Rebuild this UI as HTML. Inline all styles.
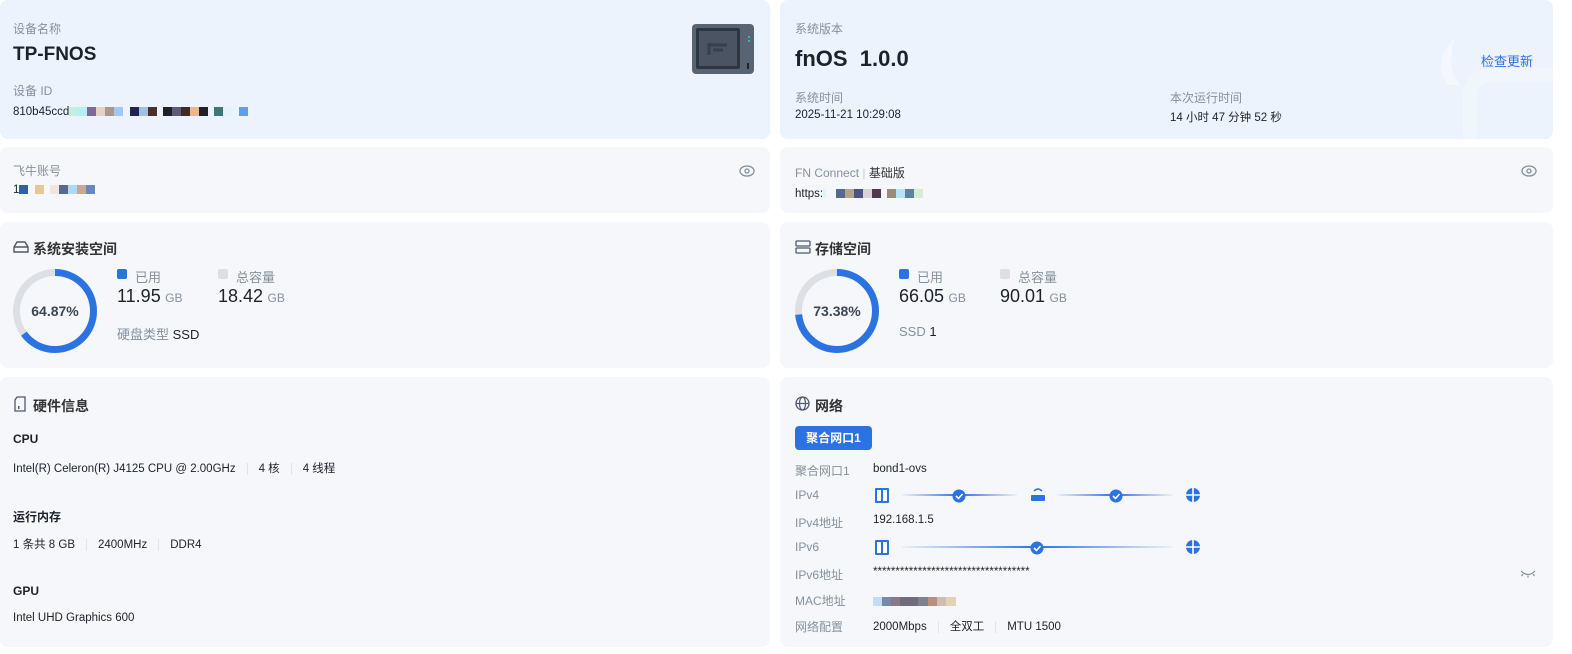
<!DOCTYPE html>
<html><head><meta charset="utf-8"><style>
*{margin:0;padding:0;box-sizing:border-box}
body{width:1572px;height:654px;background:#fff;font-family:"Liberation Sans","Noto Sans CJK SC",sans-serif;color:#1d2129;position:relative;overflow:hidden}
.c{position:absolute;border-radius:8px;background:#f5f7fb}
.b{background:#ecf3fc}
.a{position:absolute;white-space:nowrap}
.g{color:#86909c;font-size:12px}
.t{font-size:11.5px;color:#1d2129}
.h{font-size:14px;font-weight:bold;color:#333}
.px{display:inline-block;width:9px;height:9px;vertical-align:middle}
.sep{display:inline-block;width:1px;height:12px;background:#e0e3e8;margin:0 11px;vertical-align:middle}
.big{font-size:18px;color:#1d2129}
.u{font-size:12px;color:#86909c}
</style></head><body>
<div class="c b" style="left:0;top:0;width:770px;height:139px"></div>
<div class="c b" style="left:780px;top:0;width:773px;height:139px;overflow:hidden">
<svg style="position:absolute;left:640px;top:30px" width="140" height="120"><path d="M35 8 C20 20 15 45 30 55 L40 55 C28 40 30 25 35 8Z" fill="#f4f8fd"/><rect x="50" y="45" width="100" height="100" rx="20" fill="none" stroke="#f1f6fd" stroke-width="14"/></svg>
</div>
<div class="c" style="left:0;top:147px;width:770px;height:66px"></div>
<div class="c" style="left:780px;top:147px;width:773px;height:66px"></div>
<div class="c" style="left:0;top:222px;width:770px;height:146px"></div>
<div class="c" style="left:780px;top:222px;width:773px;height:146px"></div>
<div class="c" style="left:0;top:377px;width:770px;height:270px"></div>
<div class="c" style="left:780px;top:377px;width:773px;height:270px"></div>

<div class="a g" style="left:13px;top:20px">设备名称</div>
<div class="a" style="left:13px;top:44px;font-size:19px;font-weight:bold">TP-FNOS</div>
<div class="a g" style="left:13px;top:82px">设备 ID</div>
<div class="a t" style="left:13px;top:106px">810b45ccd<span class="px" style="background:#c7ece4"></span><span class="px" style="background:#b4eef6"></span><span class="px" style="background:#7b6a9a"></span><span class="px" style="background:#e6d2c4"></span><span class="px" style="background:#a8998c"></span><span class="px" style="background:#a0c8f6"></span>&nbsp;&nbsp;<span class="px" style="background:#1f2550"></span><span class="px" style="background:#a0c0e8"></span><span class="px" style="background:#4a3028"></span>&nbsp;&nbsp;<span class="px" style="background:#20222a"></span><span class="px" style="background:#5e5c78"></span><span class="px" style="background:#3e2a26"></span><span class="px" style="background:#ecb888"></span><span class="px" style="background:#1e2228"></span>&nbsp;&nbsp;<span class="px" style="background:#3a7878"></span><span class="px" style="background:#e4f2fa"></span>&nbsp;&nbsp;<span class="px" style="background:#5aa0ee"></span></div>
<svg class="a" style="left:691px;top:23px" width="66" height="55"><rect x="1" y="1" width="62" height="50" rx="4" fill="#566474"/><rect x="5" y="5" width="44" height="41" rx="2" fill="#2e3642"/><rect x="8" y="8" width="38" height="35" fill="#4a5462"/><path d="M18 20 L18 32 M18 22 L36 22 M22 27 L32 27" stroke="#37404c" stroke-width="3" fill="none"/><rect x="56" y="40" width="2" height="6" fill="#222"/><circle cx="58" cy="14" r="1" fill="#3cc"/><circle cx="58" cy="18" r="1" fill="#3cc"/></svg>

<div class="a g" style="left:795px;top:20px">系统版本</div>
<div class="a" style="left:795px;top:46px;font-size:22px;font-weight:bold">fnOS&nbsp;&nbsp;1.0.0</div>
<div class="a" style="left:1481px;top:51px;font-size:13px;color:#2a73e0">检查更新</div>
<div class="a g" style="left:795px;top:89px">系统时间</div>
<div class="a t" style="left:795px;top:109px">2025-11-21 10:29:08</div>
<div class="a g" style="left:1170px;top:89px">本次运行时间</div>
<div class="a t" style="left:1170px;top:109px">14 小时 47 分钟 52 秒</div>

<div class="a g" style="left:13px;top:162px">飞牛账号</div>
<div class="a t" style="left:13px;top:184px">1<span class="px" style="background:#3060a8"></span>&nbsp;&nbsp;<span class="px" style="background:#e6c898"></span>&nbsp;&nbsp;<span class="px" style="background:#f0e6dc"></span><span class="px" style="background:#5a6890"></span><span class="px" style="background:#b0d8f4"></span><span class="px" style="background:#c8aa88"></span><span class="px" style="background:#6888c0"></span></div>
<svg class="a" style="left:739px;top:164px" width="16" height="14"><ellipse cx="8" cy="7" rx="7" ry="5" fill="none" stroke="#86909c" stroke-width="1.3"/><circle cx="8" cy="7" r="2" fill="none" stroke="#86909c" stroke-width="1.3"/></svg>

<div class="a g" style="left:795px;top:164px">FN Connect <span style="color:#ccc">|</span> <span style="color:#333">基础版</span></div>
<div class="a t" style="left:795px;top:188px">https:<span class="px" style="background:#e0f4fc;width:3px"></span>&nbsp;&nbsp;&nbsp;<span class="px" style="background:#586890"></span><span class="px" style="background:#b0a48c"></span><span class="px" style="background:#4a5488"></span><span class="px" style="background:#d8d4d4"></span><span class="px" style="background:#503850"></span>&nbsp;&nbsp;<span class="px" style="background:#988c78"></span><span class="px" style="background:#b8e4f8"></span><span class="px" style="background:#6080a0"></span><span class="px" style="background:#d8ecd4"></span></div>
<svg class="a" style="left:1521px;top:164px" width="16" height="14"><ellipse cx="8" cy="7" rx="7" ry="5" fill="none" stroke="#86909c" stroke-width="1.3"/><circle cx="8" cy="7" r="2" fill="none" stroke="#86909c" stroke-width="1.3"/></svg>

<svg class="a" style="left:13px;top:240px" width="16" height="14"><path d="M1 7 L4 2 H12 L15 7 V12 H1Z M1 7 H15" fill="none" stroke="#4e5969" stroke-width="1.4"/></svg>
<div class="a h" style="left:33px;top:239px">系统安装空间</div>
<svg class="a" style="left:12px;top:268px" width="86" height="86"><circle cx="43" cy="43" r="38.5" fill="none" stroke="#dcdfe4" stroke-width="7"/><circle cx="43" cy="43" r="38.5" fill="none" stroke="#2a73e0" stroke-width="7" stroke-dasharray="156.9 300" transform="rotate(-90 43 43)"/></svg>
<div class="a" style="left:12px;top:303px;width:86px;text-align:center;font-size:14px;font-weight:bold;color:#3d4654">64.87%</div>
<div class="a" style="left:117px;top:269px;width:10px;height:10px;background:#2a73e0;border-radius:2px"></div>
<div class="a g" style="left:135px;top:267px;font-size:13px">已用</div>
<div class="a" style="left:218px;top:269px;width:10px;height:10px;background:#dcdfe4;border-radius:2px"></div>
<div class="a g" style="left:236px;top:267px;font-size:13px">总容量</div>
<div class="a" style="left:117px;top:286px"><span class="big">11.95</span> <span class="u">GB</span></div>
<div class="a" style="left:218px;top:286px"><span class="big">18.42</span> <span class="u">GB</span></div>
<div class="a" style="left:117px;top:324px;font-size:13px"><span style="color:#86909c">硬盘类型</span> SSD</div>

<svg class="a" style="left:795px;top:240px" width="16" height="14"><rect x="1" y="1" width="14" height="5" rx="1" fill="none" stroke="#4e5969" stroke-width="1.3"/><rect x="1" y="8" width="14" height="5" rx="1" fill="none" stroke="#4e5969" stroke-width="1.3"/></svg>
<div class="a h" style="left:815px;top:239px">存储空间</div>
<svg class="a" style="left:794px;top:268px" width="86" height="86"><circle cx="43" cy="43" r="38.5" fill="none" stroke="#dcdfe4" stroke-width="7"/><circle cx="43" cy="43" r="38.5" fill="none" stroke="#2a73e0" stroke-width="7" stroke-dasharray="177.5 300" transform="rotate(-90 43 43)"/></svg>
<div class="a" style="left:794px;top:303px;width:86px;text-align:center;font-size:14px;font-weight:bold;color:#3d4654">73.38%</div>
<div class="a" style="left:899px;top:269px;width:10px;height:10px;background:#2a73e0;border-radius:2px"></div>
<div class="a g" style="left:917px;top:267px;font-size:13px">已用</div>
<div class="a" style="left:1000px;top:269px;width:10px;height:10px;background:#dcdfe4;border-radius:2px"></div>
<div class="a g" style="left:1018px;top:267px;font-size:13px">总容量</div>
<div class="a" style="left:899px;top:286px"><span class="big">66.05</span> <span class="u">GB</span></div>
<div class="a" style="left:1000px;top:286px"><span class="big">90.01</span> <span class="u">GB</span></div>
<div class="a" style="left:899px;top:324px;font-size:13px"><span style="color:#86909c">SSD</span> 1</div>

<svg class="a" style="left:13px;top:396px" width="14" height="16"><path d="M4 1 H12 V15 H2 V4Z" fill="none" stroke="#4e5969" stroke-width="1.3"/><rect x="5" y="10" width="1.5" height="3" fill="#4e5969"/></svg>
<div class="a h" style="left:33px;top:396px">硬件信息</div>
<div class="a" style="left:13px;top:432px;font-size:12px;font-weight:bold">CPU</div>
<div class="a t" style="left:13px;top:460px">Intel(R) Celeron(R) J4125 CPU @ 2.00GHz<span class="sep"></span>4 核<span class="sep"></span>4 线程</div>
<div class="a" style="left:13px;top:508px;font-size:12px;font-weight:bold">运行内存</div>
<div class="a t" style="left:13px;top:536px">1 条共 8 GB<span class="sep"></span>2400MHz<span class="sep"></span>DDR4</div>
<div class="a" style="left:13px;top:584px;font-size:12px;font-weight:bold">GPU</div>
<div class="a t" style="left:13px;top:612px">Intel UHD Graphics 600</div>

<svg class="a" style="left:795px;top:396px" width="15" height="15"><circle cx="7.5" cy="7.5" r="6.5" fill="none" stroke="#4e5969" stroke-width="1.3"/><ellipse cx="7.5" cy="7.5" rx="3" ry="6.5" fill="none" stroke="#4e5969" stroke-width="1.2"/><path d="M1 7.5 H14" stroke="#4e5969" stroke-width="1.2"/></svg>
<div class="a h" style="left:815px;top:396px">网络</div>
<div class="a" style="left:795px;top:426px;width:77px;height:24px;background:#2a73e0;border-radius:4px;color:#fff;font-size:12px;font-weight:bold;text-align:center;line-height:24px">聚合网口1</div>
<div class="a g" style="left:795px;top:462px">聚合网口1</div><div class="a t" style="left:873px;top:463px">bond1-ovs</div>
<div class="a g" style="left:795px;top:488px">IPv4</div>
<div class="a g" style="left:795px;top:514px">IPv4地址</div><div class="a t" style="left:873px;top:514px">192.168.1.5</div>
<div class="a g" style="left:795px;top:540px">IPv6</div>
<div class="a g" style="left:795px;top:566px">IPv6地址</div><div class="a t" style="left:873px;top:566px">***********************************</div>
<div class="a g" style="left:795px;top:592px">MAC地址</div>
<div class="a" style="left:873px;top:597px;height:9px;width:83px;background:linear-gradient(90deg,#c0dcf8 0 9px,#7888a8 9px 18px,#8a7888 18px 27px,#706c7c 27px 45px,#808090 45px 55px,#b89080 55px 64px,#d0bcb0 64px 73px,#e0d4b4 73px)"></div>
<div class="a g" style="left:795px;top:618px">网络配置</div>
<div class="a t" style="left:873px;top:618px">2000Mbps<span class="sep"></span>全双工<span class="sep"></span>MTU 1500</div>
<svg class="a" style="left:870px;top:484px" width="340" height="72">
<defs><linearGradient id="l" x1="0" x2="1"><stop offset="0" stop-color="#2a73e0" stop-opacity=".05"/><stop offset=".5" stop-color="#2a73e0"/><stop offset="1" stop-color="#2a73e0" stop-opacity=".05"/></linearGradient></defs>
<g fill="#2a73e0"><rect x="5" y="4" width="14" height="15" rx="1"/><rect x="5" y="56" width="14" height="15" rx="1"/></g>
<g fill="#fff"><rect x="7" y="6" width="4" height="11"/><rect x="13" y="6" width="4" height="11"/><rect x="7" y="58" width="4" height="11"/><rect x="13" y="58" width="4" height="11"/></g>
<rect x="32" y="10" width="115" height="2" fill="url(#l)"/><rect x="187" y="10" width="115" height="2" fill="url(#l)"/><rect x="32" y="62" width="270" height="2" fill="url(#l)"/>
<g fill="#2a73e0"><circle cx="89" cy="12" r="6.5"/><circle cx="246" cy="12" r="6.5"/><circle cx="167" cy="64" r="6.5"/>
<rect x="161" y="11" width="14" height="6" rx="1"/><path d="M164 7 Q168 3 172 7" stroke="#2a73e0" fill="none" stroke-width="1.5"/>
<circle cx="323" cy="11" r="7"/><circle cx="323" cy="63" r="7"/></g>
<g stroke="#fff" stroke-width="1.6" fill="none"><path d="M86 12 L88.5 14.5 L92.5 10"/><path d="M243 12 L245.5 14.5 L249.5 10"/><path d="M164 64 L166.5 66.5 L170.5 62"/><path d="M316 11 H330 M323 4 V18"/><path d="M316 63 H330 M323 56 V70"/></g>
</svg>
<svg class="a" style="left:1520px;top:570px" width="16" height="8"><path d="M1 1 Q8 8 15 1 M3 4 L1.5 6 M8 5.5 V7.5 M13 4 L14.5 6" stroke="#86909c" fill="none" stroke-width="1.2"/></svg>
</body></html>
